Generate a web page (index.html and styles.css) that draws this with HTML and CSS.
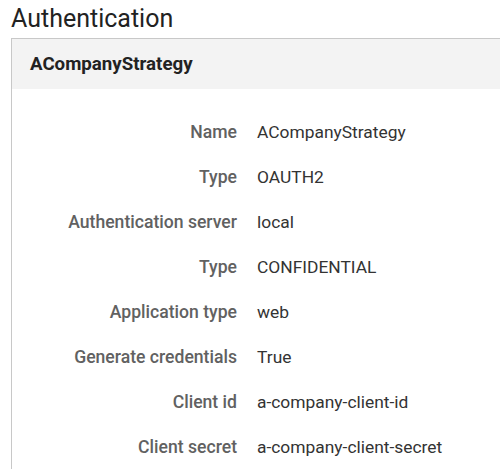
FILE: index.html
```html
<!DOCTYPE html>
<html>
<head>
<meta charset="utf-8">
<link rel="stylesheet" href="styles.css">
</head>
<body>
<h2 class="title">Authentication</h2>
<section class="card">
  <header class="card-header">ACompanyStrategy</header>
  <dl class="props">
    <dt>Name</dt><dd>ACompanyStrategy</dd>
    <dt>Type</dt><dd>OAUTH2</dd>
    <dt>Authentication server</dt><dd>local</dd>
    <dt>Type</dt><dd>CONFIDENTIAL</dd>
    <dt>Application type</dt><dd>web</dd>
    <dt>Generate credentials</dt><dd>True</dd>
    <dt>Client id</dt><dd>a-company-client-id</dd>
    <dt>Client secret</dt><dd>a-company-client-secret</dd>
  </dl>
</section>
</body>
</html>
```
FILE: styles.css
```css
html, body {
  margin: 0;
  padding: 0;
  background: #fff;
  font-family: Roboto, "Liberation Sans", sans-serif;
  overflow: hidden;
}
.title {
  margin: 0;
  padding: 4px 0 0 11px;
  height: 38px;
  box-sizing: border-box;
  font-size: 25px;
  font-weight: 400;
  line-height: 30px;
  color: #222;
}
.card {
  margin-left: 11px;
  border: 1px solid #c8c8c8;
  border-right: none;
  border-bottom: none;
  min-height: 440px;
}
.card-header {
  height: 50px;
  background: #f3f3f3;
  padding-left: 18px;
  display: flex;
  align-items: center;
  font-size: 18.7px;
  font-weight: 700;
  color: #222;
}
.props {
  margin: 0;
  padding: 20px 0 0 0;
  display: grid;
  grid-template-columns: 225px 1fr;
  grid-auto-rows: 45px;
  column-gap: 20px;
}
.props dt, .props dd {
  margin: 0;
  display: flex;
  align-items: center;
}
.props dt {
  justify-content: flex-end;
  color: #616161;
  font-weight: 500;
  font-size: 17.6px;
}
.props dd {
  color: #333;
  font-size: 17.4px;
}
```
